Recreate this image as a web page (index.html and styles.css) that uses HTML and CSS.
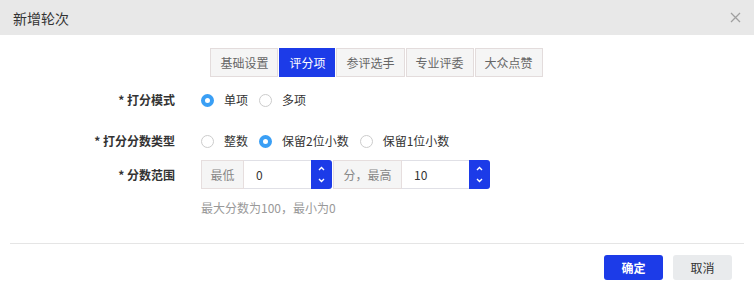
FILE: index.html
```html
<!DOCTYPE html>
<html>
<head>
    <title>新增轮次</title>
    <link rel="stylesheet" href="styles.css">
</head>
<body>
    <div class="dialog">
        <div class="dialog-header">
            <span class="dialog-title">新增轮次</span>
            <svg class="dialog-close" width="11" height="11" viewBox="0 0 11 11">
                <path d="M1 1 L10 10 M10 1 L1 10" stroke="#a0a0a0" stroke-width="1.3" fill="none"/>
            </svg>
        </div>
        <div class="dialog-body">
            <div class="tabs">
                <span class="tab">基础设置</span>
                <span class="tab active">评分项</span>
                <span class="tab">参评选手</span>
                <span class="tab">专业评委</span>
                <span class="tab">大众点赞</span>
            </div>

            <div class="form-row row-mode">
                <label class="form-label">* 打分模式</label>
                <div class="radios">
                    <span class="radio checked"><i></i>单项</span>
                    <span class="radio"><i></i>多项</span>
                </div>
            </div>

            <div class="form-row row-type">
                <label class="form-label">* 打分分数类型</label>
                <div class="radios">
                    <span class="radio"><i></i>整数</span>
                    <span class="radio checked"><i></i>保留2位小数</span>
                    <span class="radio"><i></i>保留1位小数</span>
                </div>
            </div>

            <div class="form-row row-range">
                <label class="form-label">* 分数范围</label>
                <div class="range">
                    <div class="input-group">
                        <span class="addon addon-min">最低</span>
                        <span class="num-input">0</span>
                        <span class="spinner">
                            <svg width="7" height="5" viewBox="0 0 7 5"><path d="M1 4 L3.5 1.5 L6 4" stroke="#fff" stroke-width="1.4" fill="none"/></svg>
                            <svg width="7" height="5" viewBox="0 0 7 5"><path d="M1 1 L3.5 3.5 L6 1" stroke="#fff" stroke-width="1.4" fill="none"/></svg>
                        </span>
                        <span class="addon addon-max">分，最高</span>
                        <span class="num-input">10</span>
                        <span class="spinner">
                            <svg width="7" height="5" viewBox="0 0 7 5"><path d="M1 4 L3.5 1.5 L6 4" stroke="#fff" stroke-width="1.4" fill="none"/></svg>
                            <svg width="7" height="5" viewBox="0 0 7 5"><path d="M1 1 L3.5 3.5 L6 1" stroke="#fff" stroke-width="1.4" fill="none"/></svg>
                        </span>
                    </div>
                    <div class="help">最大分数为100，最小为0</div>
                </div>
            </div>
        </div>
        <div class="dialog-footer">
            <button class="btn btn-primary">确定</button>
            <button class="btn btn-default">取消</button>
        </div>
    </div>
</body>
</html>
```

FILE: styles.css
```css
body {
    margin: 0;
    font-family: "Noto Sans CJK SC", "Liberation Sans", sans-serif;
    font-size: 12px;
    color: #333;
    background: #fff;
}
.dialog {
    width: 754px;
    height: 291px;
}
.dialog-header {
    height: 35px;
    background: #e8e8e8;
    display: flex;
    align-items: center;
    justify-content: space-between;
    padding: 0 13px 0 13px;
}
.dialog-title {
    font-size: 14px;
    color: #333;
}
.dialog-body {
    padding-top: 13px;
    height: 196px;
    box-sizing: border-box;
}
.tabs {
    display: flex;
    justify-content: center;
    padding-left: 0;
}
.tab {
    height: 29px;
    line-height: 27px;
    box-sizing: border-box;
    padding: 0 9px;
    border: 1px solid #e3dcdc;
    background: #f5f5f5;
    color: #666;
    font-size: 12px;
    margin-right: 1px;
}
.tab.active {
    background: #1c3be8;
    border-color: #1c3be8;
    color: #fff;
}
.form-row {
    display: flex;
}
.form-label {
    width: 201px;
    text-align: right;
    padding-right: 26px;
    box-sizing: border-box;
    font-weight: bold;
    color: #333;
    line-height: 20px;
}
.row-mode {
    margin-top: 13px;
}
.row-type {
    margin-top: 21px;
}
.row-range {
    margin-top: 9px;
}
.row-range .form-label {
    padding-top: 5px;
}
.radios {
    display: flex;
    line-height: 20px;
}
.radio {
    display: flex;
    align-items: center;
    margin-right: 11px;
    color: #333;
}
.radio i {
    width: 13px;
    height: 13px;
    border: 1px solid #ccc;
    border-radius: 50%;
    box-sizing: border-box;
    margin-right: 10px;
    background: #fff;
}
.radio.checked i {
    border: 4.5px solid #3a9ff5;
    background: #fff;
}
.input-group {
    display: flex;
    height: 29px;
}
.addon {
    box-sizing: border-box;
    border: 1px solid #e6dede;
    background: #f5f5f5;
    color: #888;
    line-height: 27px;
    text-align: center;
}
.addon-min {
    width: 43px;
}
.addon-max {
    width: 69px;
    margin-left: 1px;
}
.num-input {
    width: 67px;
    box-sizing: border-box;
    border: 1px solid #e0e0e6;
    border-left: none;
    border-right: none;
    padding-left: 12px;
    line-height: 27px;
    color: #333;
}
.spinner {
    width: 21px;
    background: #1c3be8;
    border-radius: 0 3px 3px 0;
    display: flex;
    flex-direction: column;
    align-items: center;
    justify-content: space-between;
    padding: 6px 0 6px;
    box-sizing: border-box;
}
.help {
    margin-top: 10px;
    color: #999;
    font-size: 12px;
}
.dialog-footer {
    margin: 12px 10px 0;
    border-top: 1px solid #e5e5e5;
    padding-top: 11px;
    display: flex;
    justify-content: flex-end;
    padding-right: 12px;
}
.btn {
    height: 25px;
    border: none;
    border-radius: 3px;
    font-family: "Noto Sans CJK SC", sans-serif;
    font-size: 12px;
    cursor: pointer;
    padding: 0;
}
.btn-primary {
    width: 59px;
    background: #1c3be8;
    color: #fff;
    font-weight: bold;
}
.btn-default {
    width: 59px;
    margin-left: 10px;
    background: #e9ebed;
    color: #333;
}
```
